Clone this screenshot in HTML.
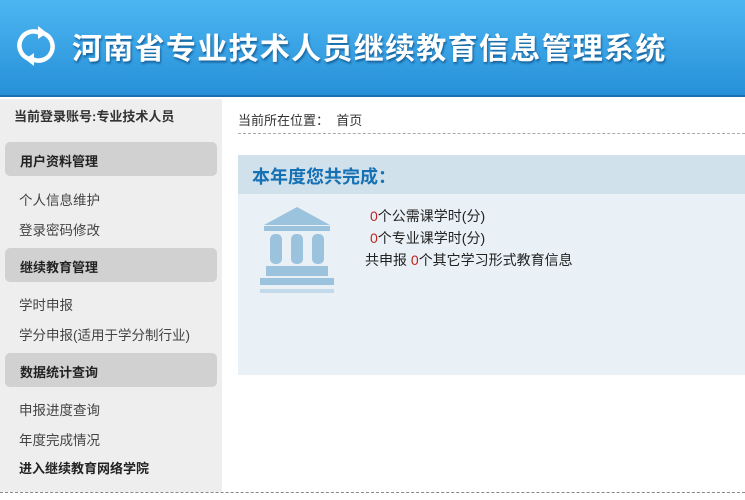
<!DOCTYPE html>
<html><head><meta charset="utf-8"><style>
*{margin:0;padding:0;box-sizing:border-box}
body{width:745px;height:500px;overflow:hidden;background:#fff;font-family:"Liberation Sans","Noto Sans CJK SC",sans-serif;font-size:13px;color:#333;position:relative}
.hd{position:absolute;left:0;top:0;width:745px;height:97px;background:linear-gradient(#4cb6f2,#2790d8);border-bottom:2px solid #1a6fb0}
.hd h1{position:absolute;left:72px;top:24px;font-size:30px;color:#fff;font-weight:bold;text-shadow:1px 2px 2px #16619a;letter-spacing:1.3px;white-space:nowrap}
.sb{position:absolute;left:0;top:99px;width:222px;height:393px;background:#eeeeee}
.acc{position:absolute;left:14px;top:7px;font-weight:bold;font-size:13px;color:#333}
.g{position:absolute;left:5px;width:212px;height:34px;background:#d1d1d1;border-radius:5px;font-weight:bold;padding:9px 0 0 15px;color:#222}
.l{position:absolute;left:19px;font-size:13.5px;color:#444}
.bc{position:absolute;left:238px;top:110px;font-size:13px}
.dl{position:absolute;left:238px;top:133px;width:507px;border-top:1px dashed #aaa}
.bl{position:absolute;left:0;top:492px;width:745px;border-top:1px dashed #888}
.box{position:absolute;left:238px;top:155px;width:507px;height:220px;background:#e9f1f7}
.bh{height:39px;background:#d0e1eb;padding:8px 0 0 14px;font-size:18px;font-weight:bold;color:#1671b4}
.t{position:absolute;font-size:14px;color:#222}
.r{color:#c0221d}
</style></head><body>
<div class="hd">
<svg style="position:absolute;left:16px;top:25px" width="40" height="42" viewBox="0 0 40 42"><g fill="none" stroke="#fff" stroke-width="4.5" stroke-linecap="round"><path d="M11 33 A14 14 0 0 1 24 8"/><path d="M29 9 A14 14 0 0 1 16 34"/></g><path d="M22 1 L31 8 L22 14Z" fill="#fff"/><path d="M18 28 L9 34 L18 41Z" fill="#fff"/></svg>
<h1>河南省专业技术人员继续教育信息管理系统</h1>
</div>
<div class="sb">
<div class="acc">当前登录账号:专业技术人员</div>
<div class="g" style="top:43px">用户资料管理</div>
<div class="l" style="top:90px">个人信息维护</div>
<div class="l" style="top:120px">登录密码修改</div>
<div class="g" style="top:149px">继续教育管理</div>
<div class="l" style="top:195px">学时申报</div>
<div class="l" style="top:225px">学分申报(适用于学分制行业)</div>
<div class="g" style="top:254px">数据统计查询</div>
<div class="l" style="top:300px">申报进度查询</div>
<div class="l" style="top:330px">年度完成情况</div>
<div class="l" style="top:359px;font-weight:bold;color:#222;font-size:13px">进入继续教育网络学院</div>
</div>
<div class="bc">当前所在位置： &nbsp;首页</div>
<div class="dl"></div>
<div class="box"><div class="bh">本年度您共完成：</div>
<svg style="position:absolute;left:22px;top:50px" width="74" height="95" viewBox="0 0 74 95"><g fill="#9cc3de"><path d="M37 2 L70 20 L4 20Z"/><rect x="4" y="21" width="66" height="5"/><rect x="10" y="29" width="12" height="30" rx="5"/><rect x="31" y="29" width="12" height="30" rx="5"/><rect x="52" y="29" width="12" height="30" rx="5"/><rect x="6" y="61" width="62" height="10"/><rect x="0" y="73" width="74" height="7"/><rect x="0" y="84" width="74" height="4" opacity=".5"/></g></svg>
<div class="t" style="left:132px;top:51px"><span class="r">0</span>个公需课学时(分)</div>
<div class="t" style="left:132px;top:73px"><span class="r">0</span>个专业课学时(分)</div>
<div class="t" style="left:127px;top:95px">共申报 <span class="r">0</span>个其它学习形式教育信息</div>
</div>
<div class="bl"></div>
</body></html>
